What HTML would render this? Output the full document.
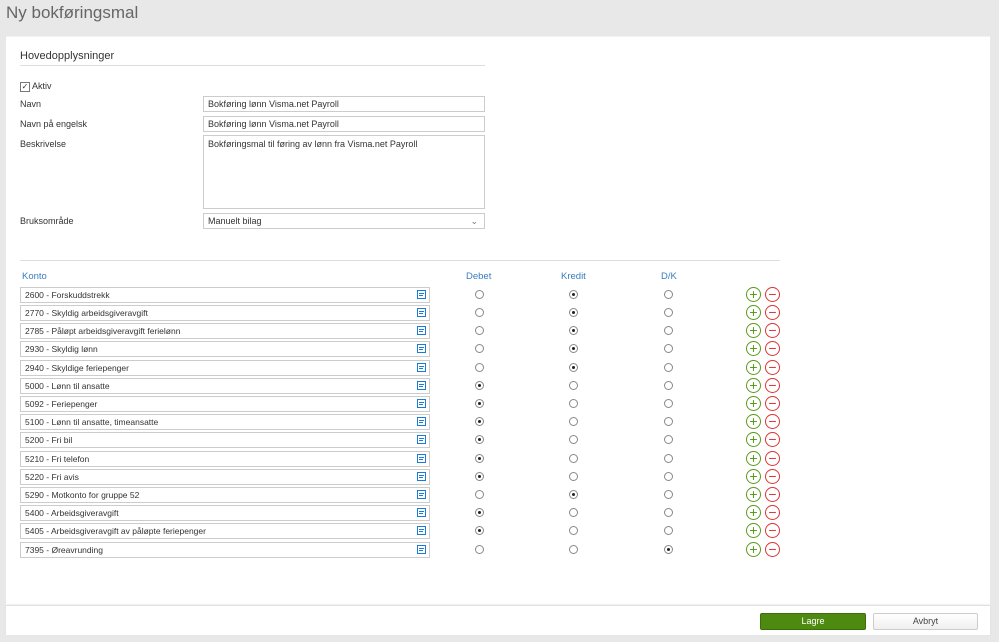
<!DOCTYPE html>
<html><head><meta charset="utf-8"><style>
body{margin:0;width:999px;height:642px;background:#e8e8e8;font-family:"Liberation Sans",sans-serif;position:relative;overflow:hidden;color:#333}
.a{position:absolute}
h1{position:absolute;left:6px;top:3px;margin:0;font-weight:normal;font-size:17px;color:#666}
.panel{left:6px;top:36px;width:984px;height:568px;background:#fff;border-top:1px solid #f2f2f2}
.foot{left:6px;top:606px;width:984px;height:29px;background:#fff;box-shadow:0 -1px 2px #ddd}
.lbl{font-size:9px;color:#333}
.inp{border:1px solid #ccc;background:#fff;font-size:9px;padding:0 4px;box-sizing:border-box;line-height:14px}
.row{position:absolute;left:20px;height:16px;width:760px}
.row .k{position:absolute;left:0;top:0;width:410px;height:16px;border:1px solid #ccc;box-sizing:border-box;font-size:8.5px;line-height:14px;padding-left:4px}
.row .ic{position:absolute;left:397px;top:3px;width:9px;height:9px;border:1px solid #1a7bd6;box-sizing:border-box;background:linear-gradient(#1a7bd6,#1a7bd6) 1px 2px/5px 1px no-repeat,linear-gradient(#1a7bd6,#1a7bd6) 1px 4px/4px 1px no-repeat}
.r{position:absolute;top:3px;width:9px;height:9px;border:1px solid #888;border-radius:50%;box-sizing:border-box;background:#fff}
.r.on::after{content:"";position:absolute;left:2px;top:2px;width:3px;height:3px;border-radius:50%;background:#222}
.p,.m{position:absolute;top:0;width:15px;height:15px;border-radius:50%;box-sizing:border-box;font-size:14px;line-height:12px;text-align:center}
.p{left:726px;border:1.5px solid #5a9a1a;color:#5a9a1a}
.m{left:745px;border:1.5px solid #d33;color:#d33}
.hd{font-size:9.5px;color:#3a7cc0}
</style></head><body>
<h1>Ny bokføringsmal</h1>
<div class="a panel"></div>
<div class="a foot"></div>
<div class="a" style="left:20px;top:50px;font-size:11px;color:#333">Hovedopplysninger</div>
<div class="a" style="left:20px;top:65px;width:465px;height:1px;background:#ddd"></div>
<div class="a" style="left:20px;top:82px;width:8px;height:8px;border:1px solid #777;font-size:8px;line-height:8px;text-align:center">✓</div>
<div class="a lbl" style="left:32px;top:81px">Aktiv</div>
<div class="a lbl" style="left:20px;top:99px">Navn</div>
<div class="a inp" style="left:203px;top:96px;width:282px;height:16px">Bokføring lønn Visma.net Payroll</div>
<div class="a lbl" style="left:20px;top:119px">Navn på engelsk</div>
<div class="a inp" style="left:203px;top:116px;width:282px;height:16px">Bokføring lønn Visma.net Payroll</div>
<div class="a lbl" style="left:20px;top:139px">Beskrivelse</div>
<div class="a inp" style="left:203px;top:135px;width:282px;height:74px;padding-top:1px">Bokføringsmal til føring av lønn fra Visma.net Payroll</div>
<div class="a lbl" style="left:20px;top:216px">Bruksområde</div>
<div class="a inp" style="left:203px;top:213px;width:282px;height:16px">Manuelt bilag<span style="position:absolute;right:6px;top:0;color:#777">⌄</span></div>
<div class="a" style="left:20px;top:260px;width:760px;height:1px;background:#ddd"></div>
<div class="a hd" style="left:22px;top:271px">Konto</div>
<div class="a hd" style="left:466px;top:271px">Debet</div>
<div class="a hd" style="left:561px;top:271px">Kredit</div>
<div class="a hd" style="left:661px;top:271px">D/K</div>

<div class="row" style="top:287px"><div class="k">2600 - Forskuddstrekk</div><div class="ic"></div><div class="r" style="left:455px"></div><div class="r on" style="left:549px"></div><div class="r" style="left:644px"></div><div class="p">+</div><div class="m">−</div></div>
<div class="row" style="top:305px"><div class="k">2770 - Skyldig arbeidsgiveravgift</div><div class="ic"></div><div class="r" style="left:455px"></div><div class="r on" style="left:549px"></div><div class="r" style="left:644px"></div><div class="p">+</div><div class="m">−</div></div>
<div class="row" style="top:323px"><div class="k">2785 - Påløpt arbeidsgiveravgift ferielønn</div><div class="ic"></div><div class="r" style="left:455px"></div><div class="r on" style="left:549px"></div><div class="r" style="left:644px"></div><div class="p">+</div><div class="m">−</div></div>
<div class="row" style="top:341px"><div class="k">2930 - Skyldig lønn</div><div class="ic"></div><div class="r" style="left:455px"></div><div class="r on" style="left:549px"></div><div class="r" style="left:644px"></div><div class="p">+</div><div class="m">−</div></div>
<div class="row" style="top:360px"><div class="k">2940 - Skyldige feriepenger</div><div class="ic"></div><div class="r" style="left:455px"></div><div class="r on" style="left:549px"></div><div class="r" style="left:644px"></div><div class="p">+</div><div class="m">−</div></div>
<div class="row" style="top:378px"><div class="k">5000 - Lønn til ansatte</div><div class="ic"></div><div class="r on" style="left:455px"></div><div class="r" style="left:549px"></div><div class="r" style="left:644px"></div><div class="p">+</div><div class="m">−</div></div>
<div class="row" style="top:396px"><div class="k">5092 - Feriepenger</div><div class="ic"></div><div class="r on" style="left:455px"></div><div class="r" style="left:549px"></div><div class="r" style="left:644px"></div><div class="p">+</div><div class="m">−</div></div>
<div class="row" style="top:414px"><div class="k">5100 - Lønn til ansatte, timeansatte</div><div class="ic"></div><div class="r on" style="left:455px"></div><div class="r" style="left:549px"></div><div class="r" style="left:644px"></div><div class="p">+</div><div class="m">−</div></div>
<div class="row" style="top:432px"><div class="k">5200 - Fri bil</div><div class="ic"></div><div class="r on" style="left:455px"></div><div class="r" style="left:549px"></div><div class="r" style="left:644px"></div><div class="p">+</div><div class="m">−</div></div>
<div class="row" style="top:451px"><div class="k">5210 - Fri telefon</div><div class="ic"></div><div class="r on" style="left:455px"></div><div class="r" style="left:549px"></div><div class="r" style="left:644px"></div><div class="p">+</div><div class="m">−</div></div>
<div class="row" style="top:469px"><div class="k">5220 - Fri avis</div><div class="ic"></div><div class="r on" style="left:455px"></div><div class="r" style="left:549px"></div><div class="r" style="left:644px"></div><div class="p">+</div><div class="m">−</div></div>
<div class="row" style="top:487px"><div class="k">5290 - Motkonto for gruppe 52</div><div class="ic"></div><div class="r" style="left:455px"></div><div class="r on" style="left:549px"></div><div class="r" style="left:644px"></div><div class="p">+</div><div class="m">−</div></div>
<div class="row" style="top:505px"><div class="k">5400 - Arbeidsgiveravgift</div><div class="ic"></div><div class="r on" style="left:455px"></div><div class="r" style="left:549px"></div><div class="r" style="left:644px"></div><div class="p">+</div><div class="m">−</div></div>
<div class="row" style="top:523px"><div class="k">5405 - Arbeidsgiveravgift av påløpte feriepenger</div><div class="ic"></div><div class="r on" style="left:455px"></div><div class="r" style="left:549px"></div><div class="r" style="left:644px"></div><div class="p">+</div><div class="m">−</div></div>
<div class="row" style="top:542px"><div class="k">7395 - Øreavrunding</div><div class="ic"></div><div class="r" style="left:455px"></div><div class="r" style="left:549px"></div><div class="r on" style="left:644px"></div><div class="p">+</div><div class="m">−</div></div>

<div class="a" style="left:760px;top:613px;width:104px;height:15px;background:#4e8a10;border:1px solid #3d6e0b;border-radius:2px;color:#fff;font-size:9px;line-height:15px;text-align:center">Lagre</div>
<div class="a" style="left:873px;top:613px;width:103px;height:15px;background:linear-gradient(#fff,#f0f0f0);border:1px solid #ccc;border-radius:2px;color:#444;font-size:9px;line-height:15px;text-align:center">Avbryt</div>
</body></html>
